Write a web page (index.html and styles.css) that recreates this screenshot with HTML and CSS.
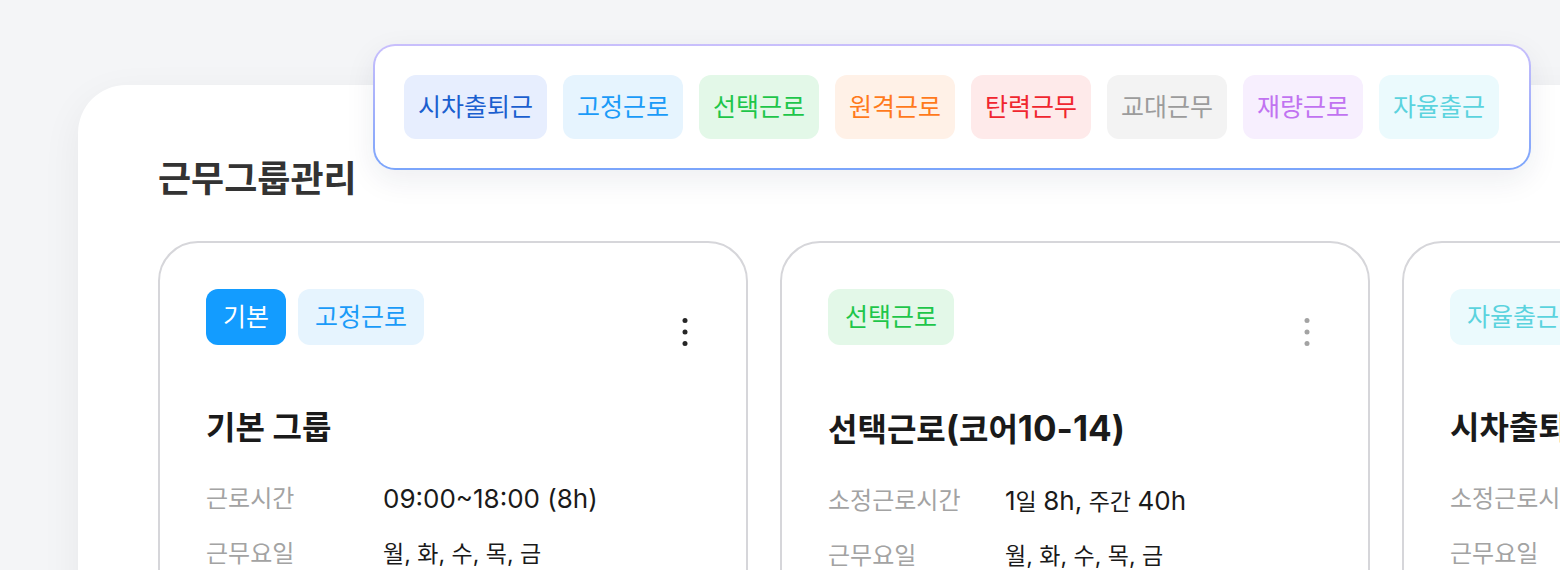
FILE: index.html
```html
<!DOCTYPE html>
<html lang="ko">
<head>
<meta charset="utf-8">
<title>근무그룹관리</title>
<link rel="stylesheet" href="styles.css">
</head>
<body>
<div class="page">
  <main class="panel">
    <h1 class="page-title">근무그룹관리</h1>
    <div class="cards">
      <section class="card">
        <div class="card-head">
          <div class="tags">
            <span class="tag tag-default">기본</span>
            <span class="tag tag-fixed">고정근로</span>
          </div>
          <button class="kebab kebab-dark" aria-label="더보기">
            <svg width="10" height="30" viewBox="0 0 10 30"><circle cx="5" cy="3.5" r="2.5"/><circle cx="5" cy="15" r="2.5"/><circle cx="5" cy="26.5" r="2.5"/></svg>
          </button>
        </div>
        <h2 class="card-title">기본 그룹</h2>
        <dl class="info">
          <dt>근로시간</dt><dd><span class="lt">09:00~18:00 (8h)</span></dd>
          <dt>근무요일</dt><dd>월, 화, 수, 목, 금</dd>
        </dl>
      </section>
      <section class="card">
        <div class="card-head">
          <div class="tags">
            <span class="tag tag-select">선택근로</span>
          </div>
          <button class="kebab kebab-light" aria-label="더보기">
            <svg width="10" height="30" viewBox="0 0 10 30"><circle cx="5" cy="3.5" r="2.5"/><circle cx="5" cy="15" r="2.5"/><circle cx="5" cy="26.5" r="2.5"/></svg>
          </button>
        </div>
        <h2 class="card-title">선택근로<span class="lt">(</span>코어<span class="lt">10-14)</span></h2>
        <dl class="info">
          <dt>소정근로시간</dt><dd><span class="lt">1</span>일 <span class="lt">8h,</span> 주간 <span class="lt">40h</span></dd>
          <dt>근무요일</dt><dd>월, 화, 수, 목, 금</dd>
        </dl>
      </section>
      <section class="card">
        <div class="card-head">
          <div class="tags">
            <span class="tag tag-auto">자율출근</span>
          </div>
        </div>
        <h2 class="card-title">시차출퇴근</h2>
        <dl class="info">
          <dt>소정근로시간</dt><dd><span class="lt">1</span>일 <span class="lt">8h,</span> 주간 <span class="lt">40h</span></dd>
          <dt>근무요일</dt><dd>월, 화, 수, 목, 금</dd>
        </dl>
      </section>
    </div>
  </main>

  <div class="type-menu">
    <span class="chip tag-stagger">시차출퇴근</span>
    <span class="chip tag-fixed">고정근로</span>
    <span class="chip tag-select">선택근로</span>
    <span class="chip tag-remote">원격근로</span>
    <span class="chip tag-flex">탄력근무</span>
    <span class="chip tag-shift">교대근무</span>
    <span class="chip tag-discretion">재량근로</span>
    <span class="chip tag-auto">자율출근</span>
  </div>
</div>
</body>
</html>
```

FILE: styles.css
```css
* { box-sizing: border-box; }

html, body {
  margin: 0;
  padding: 0;
}

body {
  width: 1560px;
  height: 570px;
  overflow: hidden;
  background: #f4f5f7;
  font-family: Inter, "Noto Sans CJK KR", sans-serif;
  color: #1a1a1a;
}

.page {
  position: relative;
  width: 1560px;
  height: 570px;
  overflow: hidden;
  padding: 85px 0 0 78px;
}

.panel {
  width: 1700px;
  height: 700px;
  background: #ffffff;
  border-radius: 48px 0 0 0;
  box-shadow: 0 12px 40px rgba(20, 24, 40, 0.06);
  padding: 72px 0 0 80px;
}

.page-title {
  margin: 0;
  font-size: 36px;
  line-height: 44px;
  font-weight: 700;
  color: #333333;
}

.cards {
  display: flex;
  gap: 32px;
  margin-top: 40px;
}

.card {
  flex: 0 0 590px;
  width: 590px;
  height: 420px;
  border: 2px solid #d6d6da;
  border-radius: 40px;
  padding: 46px;
}

.card-head {
  display: flex;
  justify-content: space-between;
  align-items: flex-end;
  height: 56px;
}

.tags {
  display: flex;
  gap: 12px;
}

.tag {
  display: inline-flex;
  align-items: center;
  height: 56px;
  padding: 0 17px;
  border-radius: 12px;
  font-size: 25px;
  line-height: 1;
  white-space: nowrap;
}

.tag-default { background: #139cff; color: #ffffff; }

.kebab {
  display: flex;
  align-items: center;
  justify-content: center;
  width: 30px;
  height: 30px;
  padding: 0;
  margin-bottom: -2px;
  border: 0;
  background: transparent;
}
.kebab svg { display: block; }
.kebab-dark svg { fill: #262626; }
.kebab-light svg { fill: #a3a3a3; }

.card-title {
  margin: 63px 0 0;
  font-size: 32px;
  line-height: 40px;
  font-weight: 700;
  color: #1a1a1a;
  white-space: nowrap;
}
.card-title .lt {
  font-size: 35px;
}

.info {
  display: grid;
  grid-template-columns: 177px auto;
  row-gap: 22px;
  margin: 35px 0 0;
  font-size: 24px;
  line-height: 32px;
}

.info dt {
  color: #a3a3a3;
  white-space: nowrap;
}

.info dd {
  margin: 0;
  font-size: 23px;
  color: #1a1a1a;
  white-space: nowrap;
}
.info .lt {
  font-size: 26px;
}

/* tag palette */
.tag-stagger    { background: #e7eefe; color: #1b5fcf; }
.tag-fixed      { background: #e6f4fe; color: #1a9bf8; }
.tag-select     { background: #e3f8e8; color: #1ec64a; }
.tag-remote     { background: #fff1e7; color: #ff7a1c; }
.tag-flex       { background: #feeaea; color: #f0262f; }
.tag-shift      { background: #f3f3f3; color: #9c9c9c; }
.tag-discretion { background: #f7effe; color: #c173f1; }
.tag-auto       { background: #ebfafd; color: #5bd3de; }

/* type picker overlay */
.type-menu {
  position: absolute;
  left: 373px;
  top: 44px;
  width: 1158px;
  height: 126px;
  display: flex;
  align-items: center;
  gap: 16px;
  padding: 0 29px;
  border: 2px solid transparent;
  border-radius: 22px;
  background:
    linear-gradient(#ffffff, #ffffff) padding-box,
    linear-gradient(180deg, #c9bffc 0%, #a3b0fb 50%, #7ba5fb 100%) border-box;
  box-shadow: 0 10px 30px rgba(30, 40, 80, 0.08);
}

.chip {
  display: inline-flex;
  align-items: center;
  height: 64px;
  padding: 0 14px;
  border-radius: 12px;
  font-size: 25px;
  line-height: 1;
  white-space: nowrap;
}
```
